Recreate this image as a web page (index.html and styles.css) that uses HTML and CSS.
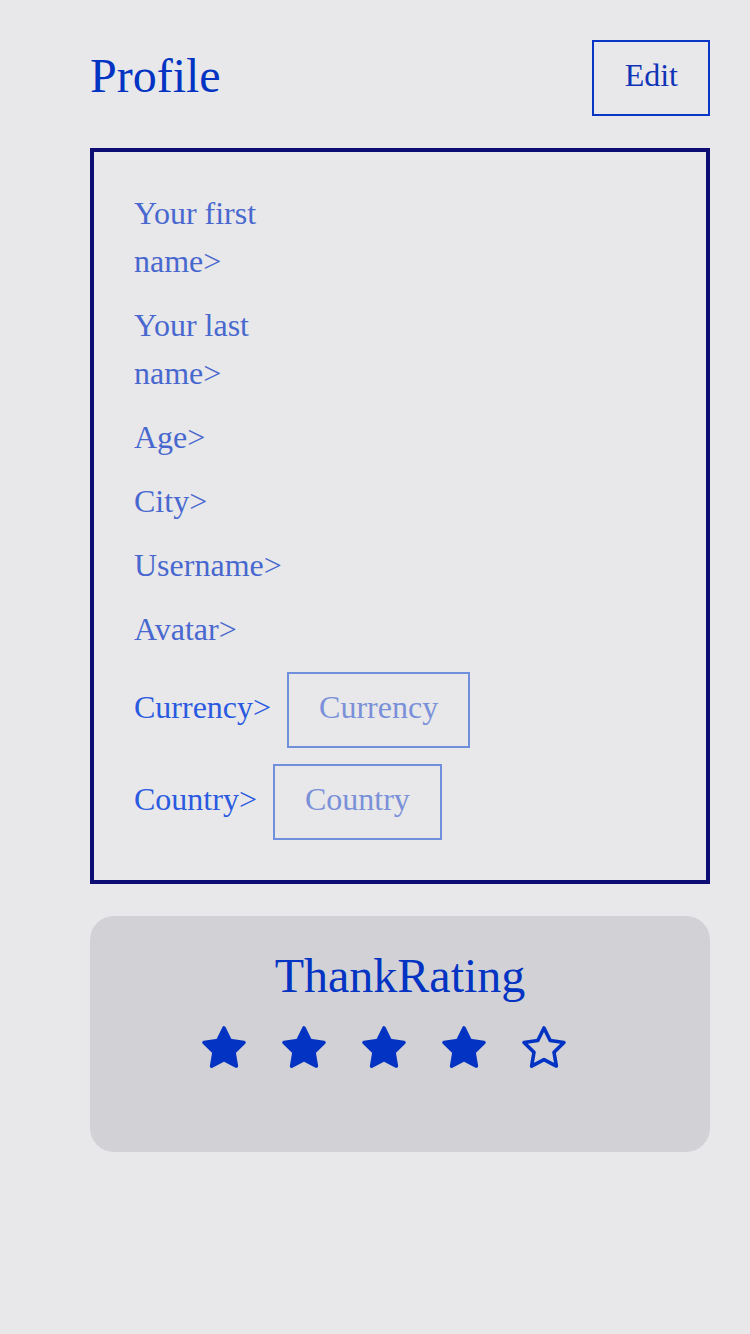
FILE: index.html
```html
<!DOCTYPE html>
<html>
<head>
<meta charset="utf-8">
<link rel="stylesheet" href="styles.css">
</head>
<body>
<div class="page">
  <header class="header">
    <h1 class="title">Profile</h1>
    <button class="edit-btn">Edit</button>
  </header>
  <section class="card">
    <div class="label">Your first name&gt;</div>
    <div class="label">Your last name&gt;</div>
    <div class="label">Age&gt;</div>
    <div class="label">City&gt;</div>
    <div class="label">Username&gt;</div>
    <div class="label">Avatar&gt;</div>
    <div class="row">
      <span class="label strong">Currency&gt;</span>
      <div class="select">Currency</div>
    </div>
    <div class="row">
      <span class="label strong">Country&gt;</span>
      <div class="select">Country</div>
    </div>
  </section>
  <section class="rating">
    <h2 class="rating-title">ThankRating</h2>
    <div class="stars">
      <svg class="star filled" viewBox="0 0 24 24"><path d="M12 2l3.09 6.26L22 9.27l-5 4.87 1.18 6.88L12 17.77l-6.18 3.25L7 14.14 2 9.27l6.91-1.01L12 2z"/></svg>
      <svg class="star filled" viewBox="0 0 24 24"><path d="M12 2l3.09 6.26L22 9.27l-5 4.87 1.18 6.88L12 17.77l-6.18 3.25L7 14.14 2 9.27l6.91-1.01L12 2z"/></svg>
      <svg class="star filled" viewBox="0 0 24 24"><path d="M12 2l3.09 6.26L22 9.27l-5 4.87 1.18 6.88L12 17.77l-6.18 3.25L7 14.14 2 9.27l6.91-1.01L12 2z"/></svg>
      <svg class="star filled" viewBox="0 0 24 24"><path d="M12 2l3.09 6.26L22 9.27l-5 4.87 1.18 6.88L12 17.77l-6.18 3.25L7 14.14 2 9.27l6.91-1.01L12 2z"/></svg>
      <svg class="star" viewBox="0 0 24 24"><path d="M12 2l3.09 6.26L22 9.27l-5 4.87 1.18 6.88L12 17.77l-6.18 3.25L7 14.14 2 9.27l6.91-1.01L12 2z"/></svg>
    </div>
  </section>
</div>
</body>
</html>
```

FILE: styles.css
```css
html, body {
  margin: 0;
  padding: 0;
  background: #e8e8ea;
}
body {
  font-family: "Liberation Serif", "Times New Roman", serif;
}
.page {
  padding: 40px 40px 40px 90px;
  display: flex;
  flex-direction: column;
  gap: 32px;
}
.header {
  display: flex;
  justify-content: space-between;
  align-items: center;
}
.title {
  margin: 0;
  padding-bottom: 4px;
  font-size: 48px;
  font-weight: normal;
  color: #0233c2;
  line-height: 1.2;
}
.edit-btn {
  font-family: inherit;
  font-size: 32px;
  line-height: 48px;
  padding: 9px 30px 15px 31px;
  color: #1034b8;
  background: transparent;
  border: 2px solid #0a36c8;
  margin: 0;
  cursor: pointer;
}
.card {
  border: 4px solid #0c0c72;
  padding: 40px;
  display: flex;
  flex-direction: column;
  align-items: flex-start;
  gap: 16px;
}
.label {
  font-size: 32px;
  line-height: 48px;
  color: #4868cf;
  max-width: 160px;
  margin-top: -3px;
  padding-bottom: 3px;
}
.label.strong {
  color: #2a5ae0;
  max-width: none;
}
.row {
  display: flex;
  align-items: center;
  gap: 16px;
}
.select {
  font-size: 32px;
  line-height: 48px;
  padding: 9px 30px 15px;
  border: 2px solid #7090de;
  color: #7a90d8;
}
.rating {
  background: #d2d1d6;
  border-radius: 24px;
  padding: 32px 0 80px;
  display: flex;
  flex-direction: column;
  align-items: center;
}
.rating-title {
  margin: 0 0 21px;
  font-size: 48px;
  font-weight: normal;
  color: #0233c2;
}
.stars {
  display: flex;
  justify-content: center;
}
.star {
  width: 48px;
  height: 48px;
  margin-right: 32px;
  fill: none;
  stroke: #0233c2;
  stroke-width: 1.8;
  stroke-linejoin: round;
  stroke-linecap: round;
}
.star.filled {
  fill: #0233c2;
}
```
